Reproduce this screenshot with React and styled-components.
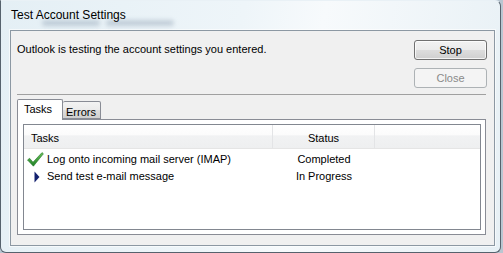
import React from 'react'
import styled, { createGlobalStyle } from 'styled-components'

const GlobalStyle = createGlobalStyle`
  html, body {
    margin: 0;
    padding: 0;
  }
  body {
    width: 503px;
    height: 253px;
    overflow: hidden;
    background: #b9c6d1;
    font-family: "Liberation Sans", Arial, sans-serif;
    font-size: 11px;
    color: #000;
  }
`

const Window = styled.div`
    box-sizing: border-box;
    width: 501px;
    height: 253px;
    display: flex;
    flex-direction: column;
    padding: 0 5px 6px 9px;
    border: 1px solid #56626d;
    border-top-color: #e9f1f6;
    border-radius: 0 6px 6px 6px;
    background: linear-gradient(100deg, #e4eff5 0%, #eef5f9 45%, #f7fafc 60%, #e7f0f5 100%);
`

const TitleBar = styled.div`
    position: relative;
    height: 29px;
    display: flex;
    align-items: flex-start;
    padding-left: 1px;
`

const Title = styled.span`
    position: relative;
    z-index: 1;
    margin-top: 6px;
    font-size: 12px;
    line-height: 16px;
    color: #000;
`

// blurred glass reflection of the window behind
const GlassSmudge = styled.div`
    position: absolute;
    top: 19px;
    left: ${({ $left }) => $left}px;
    width: ${({ $w }) => $w}px;
    height: 6px;
    border-radius: 3px;
    background: rgba(95, 115, 140, 0.28);
    filter: blur(2px);
`

const Client = styled.div`
    flex: 1;
    display: flex;
    flex-direction: column;
    padding: 9px 7px 10px 6px;
    background: #f0f0f0;
    border: 1px solid #8c98a3;
    box-shadow: 0 0 0 1px rgba(255, 255, 255, 0.6);
`

const TopRow = styled.div`
    display: flex;
    justify-content: space-between;
    align-items: flex-start;
`

const Message = styled.div`
    margin-top: 1px;
    line-height: 17px;
`

const ButtonColumn = styled.div`
    display: flex;
    flex-direction: column;
    gap: 8px;
`

const Button = styled.button`
    box-sizing: border-box;
    width: 73px;
    height: 20px;
    padding: 0;
    font-family: inherit;
    font-size: 11px;
    border-radius: 3px;
    border: 1px solid ${({ disabled }) => (disabled ? '#adb2b5' : '#707070')};
    color: ${({ disabled }) => (disabled ? '#8a8a8a' : '#000')};
    background: ${({ disabled }) => (disabled
        ? '#f4f4f4'
        : 'linear-gradient(#f2f2f2 0%, #ebebeb 50%, #dddddd 51%, #cfcfcf 100%)')};
    box-shadow: ${({ disabled }) => (disabled ? 'none' : 'inset 0 0 0 1px rgba(255,255,255,0.75)')};
`

const Separator = styled.div`
    margin: 6px 1px 0 0;
    height: 1px;
    background: #a0a0a0;
`

const TabStrip = styled.div`
    margin-top: 4px;
    height: 20px;
    display: flex;
    align-items: flex-end;
`

const Tab = styled.div`
    box-sizing: border-box;
    position: relative;
    z-index: ${({ $active }) => ($active ? 2 : 1)};
    width: ${({ $w }) => $w}px;
    height: ${({ $active }) => ($active ? '21px' : '18px')};
    margin-bottom: ${({ $active }) => ($active ? '-1px' : '0')};
    padding: ${({ $active }) => ($active ? '2px 0 0 6px' : '3px 0 0 3px')};
    line-height: 14px;
    border: 1px solid #898c95;
    border-bottom: ${({ $active }) => ($active ? 'none' : '1px solid #898c95')};
    border-left: ${({ $active }) => ($active ? '1px solid #898c95' : 'none')};
    border-radius: 2px 2px 0 0;
    background: ${({ $active }) => ($active
        ? '#ffffff'
        : 'linear-gradient(#f3f3f3 0%, #ebebeb 50%, #dddddd 51%, #cfcfcf 100%)')};
`

const TabPanel = styled.div`
    flex: 1;
    display: flex;
    flex-direction: column;
    padding: 4px 4px 4px 5px;
    border: 1px solid #898c95;
    margin-right: 1px;
    background: #fff;
`

const ListBox = styled.div`
    flex: 1;
    border: 1px solid #828790;
    background: #fff;
`

const Columns = styled.div`
    display: grid;
    grid-template-columns: 249px 102px 1fr;
`

const HeaderRow = styled(Columns)`
    height: 24px;
    background: linear-gradient(#ffffff 0%, #fbfbfb 45%, #f1f2f3 46%, #eeeff0 100%);
    border-bottom: 1px solid #e5e5e5;
    box-sizing: border-box;
`

const HeaderCell = styled.div`
    padding: 5px 0 0 ${({ $center }) => ($center ? 0 : 7)}px;
    text-align: ${({ $center }) => ($center ? 'center' : 'left')};
    line-height: 17px;
    border-right: ${({ $last }) => ($last ? 'none' : '1px solid #e3e4e6')};
`

const Rows = styled.div`
    padding-top: 2px;
`

const Row = styled(Columns)`
    height: 17px;
    line-height: 17px;
`

const TaskCell = styled.div`
    display: flex;
    align-items: center;
`

const IconBox = styled.div`
    width: 23px;
    height: 17px;
    display: flex;
    align-items: center;
    justify-content: center;
`

const StatusCell = styled.div`
    text-align: center;
`

const CheckIcon = () => (
    <svg width="17" height="15" viewBox="0 0 17 15">
        <defs>
            <linearGradient id="chk" x1="0" y1="0" x2="0" y2="1">
                <stop offset="0" stopColor="#6cc25a" />
                <stop offset="1" stopColor="#1d7f25" />
            </linearGradient>
        </defs>
        <path d="M0.5 8 L2.6 6.3 L6 10.2 L15 0.6 L16.4 1.8 L6.4 14.2 Z" fill="url(#chk)" stroke="#25772a" strokeWidth="0.6" strokeLinejoin="round" />
    </svg>
)

const ArrowIcon = () => (
    <svg width="6" height="12" viewBox="0 0 6 12" style={{ marginLeft: 3 }}>
        <path d="M0.5 0.5 L5.5 6 L0.5 11.5 Z" fill="#13206e" />
    </svg>
)

const tasks = [
    { id: 1, text: 'Log onto incoming mail server (IMAP)', status: 'Completed', done: true },
    { id: 2, text: 'Send test e-mail message', status: 'In Progress', done: false },
]

const App = () => {
    return (
        <>
            <GlobalStyle />
            <Window>
                <TitleBar>
                    <GlassSmudge $left={32} $w={58} />
                    <GlassSmudge $left={96} $w={68} />
                    <Title>Test Account Settings</Title>
                </TitleBar>
                <Client>
                    <TopRow>
                        <Message>Outlook is testing the account settings you entered.</Message>
                        <ButtonColumn>
                            <Button>Stop</Button>
                            <Button disabled>Close</Button>
                        </ButtonColumn>
                    </TopRow>
                    <Separator />
                    <TabStrip>
                        <Tab $active $w={46}>Tasks</Tab>
                        <Tab $w={38}>Errors</Tab>
                    </TabStrip>
                    <TabPanel>
                        <ListBox>
                            <HeaderRow>
                                <HeaderCell>Tasks</HeaderCell>
                                <HeaderCell $center>Status</HeaderCell>
                                <HeaderCell $last />
                            </HeaderRow>
                            <Rows>
                                {tasks.map((task) => (
                                    <Row key={task.id}>
                                        <TaskCell>
                                            <IconBox>{task.done ? <CheckIcon /> : <ArrowIcon />}</IconBox>
                                            {task.text}
                                        </TaskCell>
                                        <StatusCell>{task.status}</StatusCell>
                                        <div />
                                    </Row>
                                ))}
                            </Rows>
                        </ListBox>
                    </TabPanel>
                </Client>
            </Window>
        </>
    )
}

export default App
